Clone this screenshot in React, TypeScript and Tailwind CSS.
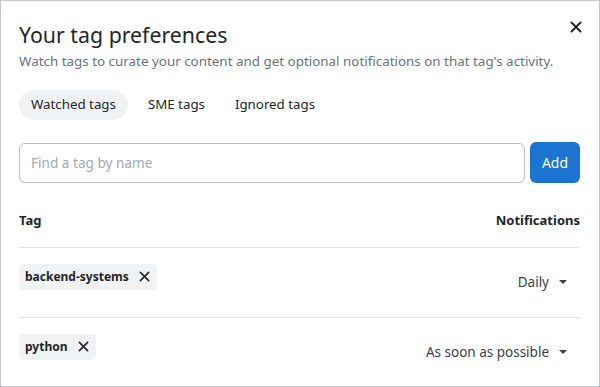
import React from "react";

function Caret() {
  return (
    <svg width="8" height="4" viewBox="0 0 8 4" className="ml-[10px]">
      <path d="M0 0 L8 0 L4 4 Z" fill="#3b4045" />
    </svg>
  );
}

function XIcon({ size = 12, stroke = 2 }: { size?: number; stroke?: number }) {
  return (
    <svg width={size} height={size} viewBox="0 0 12 12">
      <path d="M1.5 1.5 L10.5 10.5 M10.5 1.5 L1.5 10.5" stroke="#232629" strokeWidth={stroke} strokeLinecap="round" />
    </svg>
  );
}

function Row({ tag, freq, last }: { tag: string; freq: string; last?: boolean }) {
  return (
    <div className={"flex justify-between items-start py-4 " + (last ? "" : "border-b border-[#e3e6e8]")}>
      <div className="flex items-center h-[26px] rounded-[4px] bg-[#f1f2f3] pl-[6px] pr-[7px] text-[12px] font-bold text-[#232629]">
        <span>{tag}</span>
        <span className="ml-[10px] flex items-center"><XIcon size={11} stroke={1.8} /></span>
      </div>
      <div className="h-[37px] flex items-center pr-[13px] text-[13.5px] text-[#3b4045]">
        <span>{freq}</span>
        <Caret />
      </div>
    </div>
  );
}

export default function App() {
  return (
    <div
      className="w-[600px] h-[387px] bg-white border border-[#c4c8cc] overflow-hidden"
      style={{ fontFamily: '"Noto Sans", "Open Sans", sans-serif' }}
    >
      <div className="pl-[18px] pr-[19px] pt-[19px] relative">
        <button className="absolute right-[17px] top-[20px] flex items-center justify-center w-[12px] h-[12px]">
          <XIcon size={12} stroke={2} />
        </button>
        <h1 className="text-[21.3px] leading-[30px] text-[#232629]">Your tag preferences</h1>
        <p className="mt-[2px] text-[13.4px] leading-[18px] text-[#6a737c]">
          Watch tags to curate your content and get optional notifications on that tag's activity.
        </p>
        <div className="mt-[20px] flex items-center text-[13.3px] text-[#232629]">
          <div className="h-[30px] px-[12px] rounded-full bg-[#f1f2f3] flex items-center">Watched tags</div>
          <div className="ml-[8px] h-[30px] px-[12px] flex items-center">SME tags</div>
          <div className="ml-[6px] h-[30px] px-[12px] flex items-center">Ignored tags</div>
        </div>
        <div className="mt-[22px] flex items-center gap-[5px]">
          <input
            className="flex-1 h-[40px] rounded-[6px] border border-[#babfc4] px-[11px] text-[13.6px] outline-none placeholder:text-[#a3a9ae]"
            placeholder="Find a tag by name"
          />
          <button className="h-[41px] w-[50px] rounded-[6px] bg-[#1b73d2] text-white text-[14px]">Add</button>
        </div>
        <div className="mt-[28px] flex justify-between items-center text-[13px] font-bold text-[#232629] pb-[16px] border-b border-[#e3e6e8]">
          <span>Tag</span>
          <span>Notifications</span>
        </div>
        <Row tag="backend-systems" freq="Daily" />
        <Row tag="python" freq="As soon as possible" last />
      </div>
    </div>
  );
}
